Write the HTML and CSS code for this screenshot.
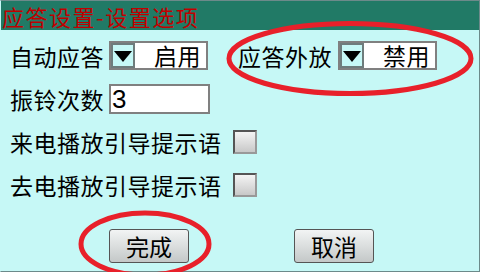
FILE: index.html
```html
<!DOCTYPE html>
<html>
  <head>
    <meta charset="UTF-8">
    <title>应答设置</title>
    <link rel="stylesheet" href="styles.css">
  </head>
<body>
	<div class="screen">
		<div class="title">应答设置-设置选项</div>
		<div class="content">
			<div class="row">
				<span class="label">自动应答</span>
				<div class="select"><span class="arrow"></span><span class="val">启用</span></div>
				<span class="label second">应答外放</span>
				<div class="select"><span class="arrow"></span><span class="val">禁用</span></div>
			</div>
			<div class="row">
				<span class="label">振铃次数</span>
				<div class="input">3</div>
			</div>
			<div class="row">
				<span class="label long">来电播放引导提示语</span>
				<div class="check"></div>
			</div>
			<div class="row">
				<span class="label long">去电播放引导提示语</span>
				<div class="check"></div>
			</div>
			<div class="buttons">
				<div class="btn">完成</div>
				<div class="btn">取消</div>
			</div>
		</div>
		<!-- 红圈标注 -->
		<svg class="marks" width="480" height="272">
			<ellipse cx="350" cy="58.5" rx="121" ry="35" fill="none" stroke="#e8202a" stroke-width="5"/>
			<ellipse cx="145" cy="244" rx="64" ry="31" fill="none" stroke="#e8202a" stroke-width="5"/>
		</svg>
	</div>
</body>
</html>
```
FILE: styles.css
```css
body{
	margin:0;
	font-family:"Noto Sans CJK SC","Liberation Serif",sans-serif;
}
.screen{
	position:relative;
	width:480px;
	height:272px;
	box-sizing:border-box;
	border:1px solid #6c8a8a;
	border-left:1px solid #c6f8f6;
	background:#c6f8f6;
}
.title{
	display:flex;
	align-items:center;
	height:29px;
	box-sizing:border-box;
	padding-top:1px;
	background:#217a66;
	color:#c00000;
	font-size:22px;
	line-height:28px;
	padding-left:1px;
	letter-spacing:1.5px;
	white-space:nowrap;
}
.content{
	padding-top:4px;
	padding-left:9px;
}
.row{
	display:flex;
	align-items:center;
	height:43px;
}
.label{
	flex:none;
	font-size:23px;
	letter-spacing:0.5px;
	color:#000;
	width:99px;
	white-space:nowrap;
}
.label.second{
	width:100px;
	margin-left:30px;
}
.label.long{
	width:auto;
}
.select{
	flex:none;
	display:flex;
	align-items:center;
	width:99px;
	height:29px;
	box-sizing:border-box;
	border:2px solid #808080;
	background:#fff;
}
.arrow{
	flex:none;
	position:relative;
	width:24px;
	height:25px;
	box-sizing:border-box;
	background:#c6f8f6;
	border:2px solid #6e7c7c;
}
.arrow::after{
	content:"";
	position:absolute;
	left:1px;
	top:6px;
	border-left:9px solid transparent;
	border-right:9px solid transparent;
	border-top:11px solid #000;
}
.val{
	flex:1;
	text-align:right;
	padding-right:5px;
	font-size:23px;
	letter-spacing:0.5px;
	line-height:25px;
}
.input{
	flex:none;
	width:101px;
	height:30px;
	box-sizing:border-box;
	border:2px solid #808080;
	background:#fff;
	font-family:"Liberation Sans",sans-serif;
	font-size:26px;
	line-height:26px;
	padding-left:1px;
}
.check{
	flex:none;
	width:24px;
	height:24px;
	box-sizing:border-box;
	margin-left:11px;
	border:2px solid #555;
	border-right-color:#999;
	border-bottom-color:#999;
	background:linear-gradient(#f4f4f4,#c8c8c8);
}
.buttons{
	display:flex;
	padding-top:23px;
	padding-left:99px;
	gap:105px;
}
.btn{
	width:80px;
	height:34px;
	box-sizing:border-box;
	border:1px solid #555;
	border-radius:3px;
	background:linear-gradient(#f2f4f4,#c4c8c8);
	font-size:23px;
	text-align:center;
	line-height:32px;
}
.marks{
	position:absolute;
	left:-1px;
	top:-1px;
}
```
